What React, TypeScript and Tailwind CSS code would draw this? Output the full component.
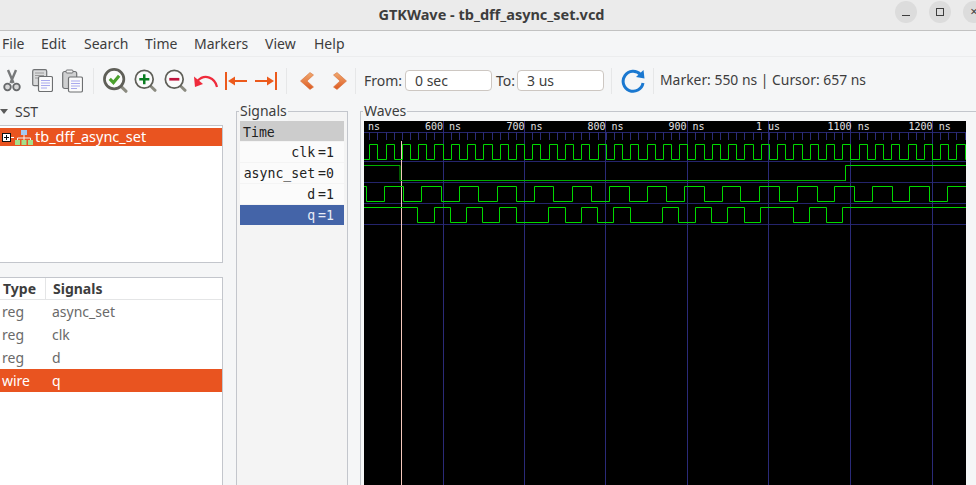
const pxPerNs = 0.8157;
const xAt = (ns: number) => 442.6 + (ns - 600) * pxPerNs - 364;

const clkEdges: number[] = [];
for (let t = 510; t < 1280; t += 10) clkEdges.push(xAt(t) + 364);

const dEdges = [
  365.7, 384.3, 403.3, 421.3, 440.7, 459.3, 478.3, 497.3, 515.7, 534.3, 553.3, 572.3, 591, 609.3, 628.7, 647.3, 666,
  684.3, 703.7, 722.3, 740.3, 759.3, 778.7, 797.3, 816.7, 834.3, 853.7, 872.3, 891.7, 909.3, 928.7, 947.3,
];
const qEdges = [
  417.3, 434.3, 450, 466.3, 482.3, 499.3, 515.7, 548.3, 564.7, 581, 597.3, 613.3, 630.3, 662.3, 678.3, 695.3, 711.3,
  727.3, 744.3, 760.3, 793.3, 809.3, 825.7, 842.3,
];

// edges are page x, drawn inside the black canvas which starts at 364
const trace = (edges: number[], startHigh: boolean, hi: number, lo: number) => {
  let high = startHigh;
  let d = `M0 ${high ? hi : lo}`;
  edges
    .filter((e) => e > 364 && e < 966)
    .forEach((e) => {
      const x = Math.round(e - 364) + 0.5;
      d += ` H${x} V${high ? lo : hi}`;
      high = !high;
    });
  return d + " H602";
};

const timeLabels = [
  { x: 442.6, t: "600", start: 425 },
  { x: 523.7, t: "700", start: 506.5 },
  { x: 605.3, t: "800", start: 587.5 },
  { x: 687.3, t: "900", start: 668.5 },
  { x: 768.3, t: "1", start: 756 },
  { x: 850.3, t: "1100", start: 827.5 },
  { x: 932, t: "1200", start: 908.5 },
];

const Waves = () => {
  const ticks: number[] = [];
  for (let t = 510; t < 1290; t += 10) ticks.push(Math.round(xAt(t)) + 0.5);
  return (
    <svg width="602" height="364" viewBox="0 0 602 364" className="block">
      <rect width="602" height="364" fill="#000" />
      <path d="M0 11.5H602" stroke="#26266e" />
      {ticks.map((x) => (
        <path key={x} d={`M${x} 11V19`} stroke="#2c2c78" />
      ))}
      {[40.5, 61.5, 82.5, 103.5].map((y) => (
        <path key={y} d={`M0 ${y}H602`} stroke="#24246c" />
      ))}
      {timeLabels.map((l) => (
        <path key={l.x} d={`M${Math.round(l.x - 364) + 0.5} 0V364`} stroke="#2a2a78" />
      ))}
      <path d="M37.5 20V364" stroke="#f4c8bc" />
      <text x="4" y="9" fill="#e2e2e2" fontSize="10" fontFamily="'DejaVu Sans Mono', monospace">
        ns
      </text>
      {timeLabels.map((l) => (
        <text
          key={l.t}
          x={l.start - 364}
          y="9"
          fill="#e2e2e2"
          fontSize="10"
          fontFamily="'DejaVu Sans Mono', monospace"
        >
          {l.t} {l.t === "1" ? "us" : "ns"}
        </text>
      ))}
      <path d={trace(clkEdges, false, 23.5, 38.5)} fill="none" stroke="#00d800" />
      <path d="M0 44.5H36V59.5H482" fill="none" stroke="#00b000" />
      <path d="M481.5 59.5V44.5H602" fill="none" stroke="#00d800" />
      <path d={trace(dEdges, true, 65.5, 80.5)} fill="none" stroke="#00d800" />
      <path d={trace(qEdges, true, 86.5, 101.5)} fill="none" stroke="#00d800" />
    </svg>
  );
};

const Scissors = () => (
  <svg width="18" height="23" viewBox="0 0 18 23">
    <path d="M5 1 L10.5 14 M13 1 L7.5 14" stroke="#77797a" strokeWidth="2.4" fill="none" />
    <circle cx="4.5" cy="18" r="3.3" fill="#d8d8d8" stroke="#66686a" strokeWidth="1.8" />
    <circle cx="13.5" cy="18" r="3.3" fill="#d8d8d8" stroke="#66686a" strokeWidth="1.8" />
  </svg>
);

const DocFront = () => (
  <g>
    <rect x="6.5" y="7.5" width="14" height="15" rx="1.5" fill="#fbfbfb" stroke="#6d6f71" strokeWidth="1.2" />
    <path d="M9 11.5H18M9 14H18M9 16.5H18M9 19H15" stroke="#a9a9ee" />
  </g>
);

const Copy = () => (
  <svg width="21" height="23" viewBox="0 0 21 23">
    <rect x="0.7" y="0.7" width="14" height="16" rx="1.5" fill="#d9dadb" stroke="#707274" strokeWidth="1.2" />
    <path d="M3 4H12M3 6.5H12M3 9H8" stroke="#9a9a9a" />
    <DocFront />
  </svg>
);

const Paste = () => (
  <svg width="21" height="24" viewBox="0 0 21 23">
    <rect x="0.7" y="2" width="14" height="17" rx="2" fill="#cfd0d1" stroke="#707274" strokeWidth="1.2" />
    <rect x="4" y="0.5" width="7" height="3" rx="1" fill="#f2f2f2" stroke="#707274" />
    <DocFront />
  </svg>
);

const Lens = ({ size, children, thick }: { size: number; children: React.ReactNode; thick?: boolean }) => (
  <svg width={size} height={size} viewBox="0 0 24 24">
    <path d="M16.5 17 L22 22.3" stroke="#8b8b80" strokeWidth="3" strokeLinecap="round" />
    <circle cx="10.7" cy="10.7" r="9.3" fill="#fbfbfb" stroke="#5f5f58" strokeWidth={thick ? 2.6 : 1.8} />
    {children}
  </svg>
);

const ArrowBar = ({ flip }: { flip?: boolean }) => (
  <svg width="22" height="18" viewBox="0 0 22 18" className={flip ? "-scale-x-100" : ""}>
    <path d="M1 0V18" stroke="#ec5a1c" strokeWidth="2" />
    <path d="M8 9H22" stroke="#ec5a1c" strokeWidth="2" />
    <path d="M3 9L10 4.5V13.5Z" fill="#ec5a1c" />
  </svg>
);

const Chevron = ({ flip }: { flip?: boolean }) => (
  <svg width="14" height="18" viewBox="0 0 14 18" className={flip ? "-scale-x-100" : ""}>
    <defs>
      <linearGradient id="chev" x1="0" y1="0" x2="0" y2="1">
        <stop offset="0" stopColor="#f0aa70" />
        <stop offset="1" stopColor="#dd5a22" />
      </linearGradient>
    </defs>
    <path d="M10 0.5L13.5 3L7 9L13.5 15L10 17.5L0.5 9Z" fill="url(#chev)" stroke="#d9703a" strokeWidth="0.6" />
  </svg>
);

const Sep = () => <div className="h-[26px] w-px bg-[#e6e7e8]" />;

const menu = [
  { t: "File", w: "w-[39px]" },
  { t: "Edit", w: "w-[43px]" },
  { t: "Search", w: "w-[61px]" },
  { t: "Time", w: "w-[49px]" },
  { t: "Markers", w: "w-[71px]" },
  { t: "View", w: "w-[49px]" },
  { t: "Help", w: "w-[40px]" },
];

const rows = [
  { type: "reg", name: "async_set" },
  { type: "reg", name: "clk" },
  { type: "reg", name: "d" },
  { type: "wire", name: "q", active: true },
];

const signals = [
  { name: "clk", v: "1" },
  { name: "async_set", v: "0" },
  { name: "d", v: "1" },
  { name: "q", v: "1", active: true },
];

const SstIcon = () => (
  <svg width="18" height="15" viewBox="0 0 18 15">
    <rect x="6" y="0" width="6" height="5" fill="#a6c8f0" />
    <path d="M9 5V8M2.5 10V8H15.5V10M9 8V10" stroke="#f3f3f3" fill="none" />
    <rect x="0" y="10" width="5" height="5" fill="#a4e08c" />
    <rect x="6.5" y="10" width="5" height="5" fill="#a4e08c" />
    <rect x="13" y="10" width="5" height="5" fill="#a4e08c" />
  </svg>
);

const Expander = () => (
  <svg width="9" height="9" viewBox="0 0 9 9" className="ml-[2px] shrink-0">
    <rect x="0.5" y="0.5" width="8" height="8" fill="#fff" stroke="#111" />
    <path d="M2 4.5H7M4.5 2V7" stroke="#111" />
  </svg>
);

export default function App() {
  return (
    <div className="flex h-[485px] w-[976px] flex-col overflow-hidden bg-[#f5f6f7] font-['Noto_Sans',sans-serif] text-[#3d3d3d]">
      <div className="relative flex h-[31px] shrink-0 items-center justify-center border-b border-[#c2c2c2] bg-[#ebebeb] pl-[7px]">
        <span className="text-[14.5px] font-bold text-[#3d3d3d]">GTKWave - tb_dff_async_set.vcd</span>
        <div className="absolute top-px left-[895px] flex gap-[12px]">
          <div className="flex h-[22px] w-[22px] items-center justify-center rounded-full bg-[#dcdcdc]">
            <div className="mt-[6px] h-px w-2 bg-[#3d3d3d]" />
          </div>
          <div className="flex h-[22px] w-[22px] items-center justify-center rounded-full bg-[#dcdcdc]">
            <div className="h-[8px] w-[8px] border border-[#3d3d3d]" />
          </div>
          <div className="flex h-[22px] w-[22px] items-center justify-center rounded-full bg-[#dcdcdc] text-[13px]">
            ×
          </div>
        </div>
      </div>

      <div className="flex h-[26px] shrink-0 items-center border-b border-[#ecedee] pl-[2px] text-[14px]">
        {menu.map((m) => (
          <span key={m.t} className={m.w}>
            {m.t}
          </span>
        ))}
      </div>

      <div className="flex h-[47px] shrink-0 items-center text-[14px]">
        <div className="ml-[3px]">
          <Scissors />
        </div>
        <div className="ml-[11px]">
          <Copy />
        </div>
        <div className="ml-[9px]">
          <Paste />
        </div>
        <div className="mr-[9px] ml-[10px]">
          <Sep />
        </div>
        <Lens size={25} thick>
          <path d="M6.5 10.5L10 14L15.5 7.5" stroke="#4aa02c" strokeWidth="3" fill="none" />
        </Lens>
        <div className="ml-[6px]">
          <Lens size={23}>
            <path d="M5.5 10.7H16M10.7 5.5V16" stroke="#0a7d20" strokeWidth="2.6" />
          </Lens>
        </div>
        <div className="ml-[7px]">
          <Lens size={23}>
            <path d="M5.5 10.7H16" stroke="#c0143c" strokeWidth="2.8" />
          </Lens>
        </div>
        <svg width="24" height="14" viewBox="0 0 24 14" className="ml-[7px]">
          <path d="M23 13C21 4 11 -1 3.5 7" stroke="#ef2b3c" strokeWidth="2.2" fill="none" />
          <path d="M0 2.5L1 13L9 10Z" fill="#ef2b3c" />
        </svg>
        <div className="ml-[7px]">
          <ArrowBar />
        </div>
        <div className="ml-[8px]">
          <ArrowBar flip />
        </div>
        <div className="mr-[13px] ml-[9px]">
          <Sep />
        </div>
        <Chevron />
        <div className="ml-[19px]">
          <Chevron flip />
        </div>
        <div className="mr-[8px] ml-[8px]">
          <Sep />
        </div>
        <span className="w-[41px]">From:</span>
        <div className="flex h-[21px] w-[87px] items-center rounded-[4px] border border-[#cdc7c2] bg-white pl-[9px]">
          0 sec
        </div>
        <span className="ml-[4px] w-[21px]">To:</span>
        <div className="flex h-[21px] w-[87px] items-center rounded-[4px] border border-[#cdc7c2] bg-white pl-[9px]">
          3 us
        </div>
        <div className="mr-[9px] ml-[7px]">
          <Sep />
        </div>
        <svg width="24" height="24" viewBox="0 0 24 24">
          <path d="M19.5 5.5A10 10 0 1 0 22 14" stroke="#1a78d0" strokeWidth="3" fill="none" />
          <path d="M15 8L23.5 9.5L22.5 1Z" fill="#1a78d0" />
        </svg>
        <div className="mr-[6px] ml-[8px]">
          <Sep />
        </div>
        <span className="whitespace-pre text-[13.9px]">Marker: 550 ns | Cursor: 657 ns</span>
      </div>

      <div className="flex min-h-0 flex-1">
        <div className="flex w-[223px] shrink-0 flex-col">
          <div className="flex h-[21px] items-center pb-[6px] text-[14px]">
            <div className="h-0 w-0 border-x-[4px] border-t-[5px] border-x-transparent border-t-[#5a5a5a]" />
            <span className="ml-[7px]">SST</span>
          </div>
          <div className="h-[138px] border-y border-r border-[#c3c6cc] bg-white pt-[2px]">
            <div className="flex h-[18px] items-center bg-[#e95420] text-[14.5px] text-white">
              <Expander />
              <div className="h-px w-[3px] bg-white" />
              <div className="ml-px">
                <SstIcon />
              </div>
              <span className="ml-[2px]">tb_dff_async_set</span>
            </div>
          </div>
          <div className="mt-[14px] flex-1 border-t border-r border-[#c3c6cc] bg-white text-[14px]">
            <div className="flex h-[22px] items-center border-b border-[#e4e5e6] font-bold">
              <span className="w-[46px] border-r border-[#e4e5e6] pl-[3px]">Type</span>
              <span className="pl-[7px]">Signals</span>
            </div>
            {rows.map((r) => (
              <div
                key={r.name}
                className={`flex h-[23px] items-center ${r.active ? "bg-[#e95420] text-white" : "text-[#6a6a6a]"}`}
              >
                <span className="w-[52px] pl-[2px]">{r.type}</span>
                <span>{r.name}</span>
              </div>
            ))}
          </div>
        </div>

        <div className="relative mt-[7px] ml-[13px] h-[400px] w-[112px] shrink-0 border-x border-t border-[#c3c6cc] bg-[#f4f4f4] pt-[9px] pr-[3px] pl-[3px] font-['DejaVu_Sans_Mono',monospace] text-[13.2px]">
          <span className="absolute -top-[12px] left-[2px] bg-[#f5f6f7] px-px font-['Noto_Sans',sans-serif] text-[14px]">
            Signals
          </span>
          <div className="flex h-[20px] items-center bg-[#cccccc] pt-[3px] pl-[3px] text-[#222]">Time</div>
          {signals.map((s) => (
            <div
              key={s.name}
              className={`mt-px flex h-[20px] items-center justify-end pt-px pr-[10px] ${
                s.active ? "bg-[#4464a8] text-[#e8ecf6]" : "bg-[#fbfbfb] text-[#222]"
              }`}
            >
              {s.name}
              <span className="ml-[3px]">={s.v}</span>
            </div>
          ))}
        </div>

        <div className="relative mt-[7px] ml-[12px] flex-1 border-t border-l border-[#c3c6cc] pt-[9px] pl-[3px]">
          <span className="absolute -top-[12px] left-[2px] bg-[#f5f6f7] px-px text-[14px]">Waves</span>
          <Waves />
        </div>
      </div>
    </div>
  );
}
